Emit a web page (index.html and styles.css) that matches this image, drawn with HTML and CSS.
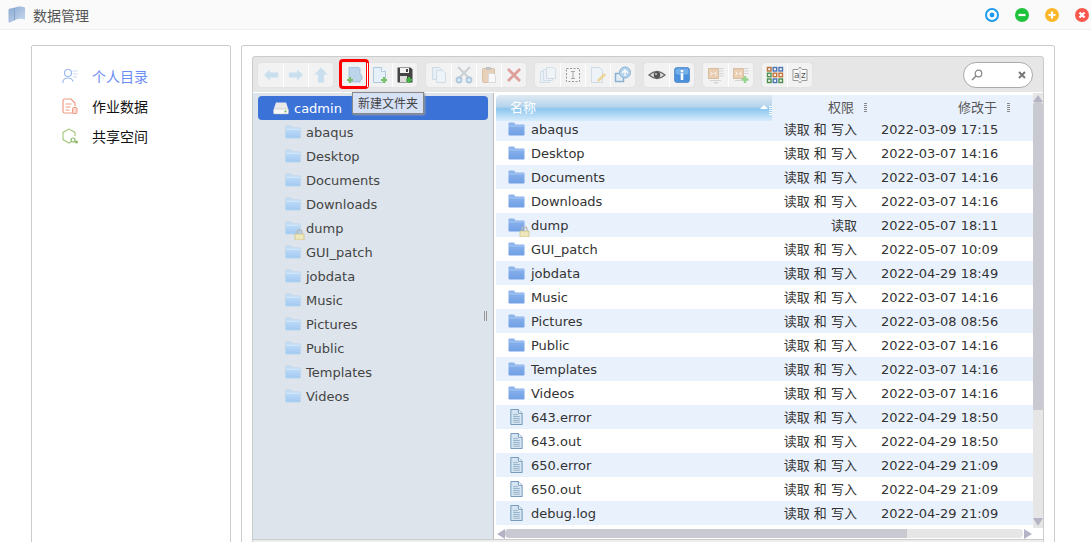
FILE: index.html
```html
<!DOCTYPE html>
<html lang="zh">
<head>
	<meta charset="utf-8" />
	<title>数据管理</title>
	<link rel="stylesheet" href="styles.css">
</head>
<body>
	<svg class="defs" width="0" height="0">
		<defs>
			<linearGradient id="gFolder" x1="0" y1="0" x2="0" y2="1"><stop offset="0" stop-color="#8fb6ee"/><stop offset="1" stop-color="#6f9fe4"/></linearGradient>
			<linearGradient id="gTree" x1="0" y1="0" x2="0" y2="1"><stop offset="0" stop-color="#c6dff8"/><stop offset="1" stop-color="#a2caf2"/></linearGradient>
			<linearGradient id="gLogo" x1="0" y1="0" x2="1" y2="1"><stop offset="0" stop-color="#8ba9d2"/><stop offset="1" stop-color="#c9daf0"/></linearGradient>
			<symbol id="i-folder" viewBox="0 0 17 16"><path d="M0.5 2.500q0-1 1-1h4.500l1.500 2h8q1 0 1 1v9q0 1-1 1h-14q-1 0-1-1z" fill="url(#gFolder)"/><path d="M0.500 5h16" stroke="#a9c8f3" fill="none"/></symbol>
			<symbol id="i-tfolder" viewBox="0 0 17 16"><path d="M0.500 2.500q0-1 1-1h4.500l1.500 2h8q1 0 1 1v9q0 1-1 1h-14q-1 0-1-1z" fill="url(#gTree)" stroke="#b6d2ee" stroke-width=".6"/><path d="M1 5h15" stroke="#dcebfa" fill="none"/></symbol>
			<symbol id="i-file" viewBox="0 0 17 17"><path d="M2.500 0.500h8l4 4v12h-12z" fill="#d5e5f2" stroke="#6d94b8"/><path d="M10.500 0.500v4h4" fill="#fff" stroke="#6d94b8"/><path d="M5 6h5M5 8h7M5 10h7M5 12h7M5 14h7" stroke="#94b0c8"/></symbol>
			<symbol id="i-lock" viewBox="0 0 11 11"><path d="M3 5V3.500a2.500 2.500 0 0 1 5 0V5" fill="none" stroke="#b9b9b9" stroke-width="1.300"/><rect x="1" y="5" width="9" height="6" fill="#efe6bb" stroke="#c8bd85" stroke-width=".7"/></symbol>
			<symbol id="i-drive" viewBox="0 0 16 14"><path d="M3 1.500h10l2.500 7h-15z" fill="#e9e9e9"/><rect x="0.500" y="8" width="15" height="5" rx="1" fill="#f8f8f8" stroke="#b8b8b8" stroke-width=".5"/><circle cx="12.500" cy="10.500" r="1" fill="#63b04c"/></symbol>
			<symbol id="t-back" viewBox="0 0 18 18"><path d="M2 9l6-5.500v3h8v5H8v3z" fill="#c4dcee" stroke="#d6e7f4" stroke-width=".6"/></symbol>
			<symbol id="t-forward" viewBox="0 0 18 18"><path d="M16 9l-6-5.500v3H2v5h8v3z" fill="#c4dcee" stroke="#d6e7f4" stroke-width=".6"/></symbol>
			<symbol id="t-up" viewBox="0 0 18 18"><path d="M9 1.500l6.500 7H12v8H6v-8H2.500z" fill="#c4dcee" stroke="#d6e7f4" stroke-width=".6"/></symbol>
			<symbol id="t-mkdir" viewBox="0 0 18 18"><path d="M3 1.500h10l1 1v6q2 .5 2 1.500v3q0 1-2 1.500v1.500H3z" fill="#bcd5ea" stroke="#93b7d6" stroke-width=".7"/><path d="M4 11v6M1 14h6" stroke="#7cc068" stroke-width="2.200"/></symbol>
			<symbol id="t-mkfile" viewBox="0 0 18 18"><path d="M2.500 1.500h8l4 4v11h-12z" fill="#e6f0f9" stroke="#b0c8dc"/><path d="M10.500 1.500v4h4" fill="#fff" stroke="#b0c8dc"/><path d="M13 11v6M10 14h6" stroke="#7cc068" stroke-width="2.200"/></symbol>
			<symbol id="t-save" viewBox="0 0 18 18"><path d="M1.500 1.500h13l2 2v13h-15z" fill="#444"/><rect x="4" y="2" width="9" height="5" fill="#f2f2f2"/><rect x="10" y="3" width="2" height="3" fill="#444"/><rect x="4" y="10" width="7" height="6" fill="#ddd"/><path d="M13 11v6M10 14h6" stroke="#46b348" stroke-width="2.400"/></symbol>
			<symbol id="t-copy" viewBox="0 0 18 18"><path d="M2.500 1.500h7l2 2v10h-9z" fill="#e6eff6" stroke="#c9d9e6"/><path d="M6.500 4.500h6l3 3v9h-9z" fill="#eef4f9" stroke="#c9d9e6"/></symbol>
			<symbol id="t-cut" viewBox="0 0 18 18"><path d="M3 1l11 11M15 1L4 12" stroke="#c4c9ce" stroke-width="2" fill="none"/><circle cx="4" cy="14" r="2.600" fill="#dbe8f3" stroke="#9fc0dc" stroke-width="1.600"/><circle cx="14" cy="14" r="2.600" fill="#dbe8f3" stroke="#9fc0dc" stroke-width="1.600"/></symbol>
			<symbol id="t-paste" viewBox="0 0 18 18"><rect x="2.500" y="2.500" width="12" height="14" rx="1" fill="#e6cdb0" stroke="#d3b898"/><rect x="6" y="1" width="5" height="3" fill="#bbb"/><path d="M8.500 7.500h5l2 2v7h-7z" fill="#fafafa" stroke="#d8d8d8"/></symbol>
			<symbol id="t-rm" viewBox="0 0 18 18"><path d="M3 3l12 12M15 3L3 15" stroke="#dc928d" stroke-width="2.800" fill="none"/></symbol>
			<symbol id="t-dup" viewBox="0 0 18 18"><path d="M1.500 5.500h7l2 2v9h-9z" fill="#e9f0f6" stroke="#ccdae6"/><path d="M4.500 3.500h7l2 2v9h-9z" fill="#e9f0f6" stroke="#ccdae6"/><path d="M7.500 1.500h7l2 2v9h-9z" fill="#f0f5f9" stroke="#ccdae6"/></symbol>
			<symbol id="t-rename" viewBox="0 0 18 18"><rect x="2.500" y="2.500" width="13" height="13" fill="#f6f6f6" stroke="#888" stroke-dasharray="2 1.500"/><path d="M7 5.500h4M7 12.500h4M9 5.500v7" stroke="#999" fill="none"/></symbol>
			<symbol id="t-edit" viewBox="0 0 18 18"><path d="M2.500 1.500h8l3 3v12h-11z" fill="#eef4f9" stroke="#c9d9e6"/><path d="M8 16l1-3 6-6 2 2-6 6z" fill="#eccf8c"/></symbol>
			<symbol id="t-resize" viewBox="0 0 18 18"><rect x="1.500" y="7.500" width="8" height="8" fill="#e0ecf6" stroke="#7ba7cf" stroke-width="1.500"/><circle cx="11" cy="6.500" r="5.500" fill="#aacdea" stroke="#7ba7cf"/><path d="M8 7l3-3 3 3M11 4.500V10" stroke="#fff" fill="none" stroke-width="1.400"/></symbol>
			<symbol id="t-eye" viewBox="0 0 18 18"><path d="M1 9q8-7 16 0q-8 7-16 0z" fill="#e4e4e4" stroke="#666" stroke-width="1.300"/><circle cx="9" cy="9" r="3.300" fill="#555"/><circle cx="8" cy="8" r="1" fill="#ccc"/></symbol>
			<symbol id="t-info" viewBox="0 0 18 18"><rect x="1.500" y="1.500" width="15" height="15" rx="2.500" fill="#4a90dc" stroke="#3a78c0" stroke-width=".6"/><rect x="2.500" y="2.500" width="13" height="6" rx="2" fill="#74aee8"/><rect x="7.700" y="4" width="2.600" height="2.200" fill="#fff"/><rect x="7.700" y="7.200" width="2.600" height="6.800" fill="#fff"/></symbol>
			<symbol id="t-extract" viewBox="0 0 18 18"><rect x="1.500" y="2.500" width="10" height="10" fill="#e9c8a8" stroke="#d3b494"/><path d="M3.500 6l2 1.500-2 1.500M9.500 6l-2 1.500 2 1.500" stroke="#fff" fill="none"/><path d="M11.500 2.500h5M11.500 5h5M11.500 7.500h5M11.500 10h5M3 14.500h11" stroke="#cfcfcf"/><path d="M6 16h6l-3 2z" fill="#cfcfcf"/></symbol>
			<symbol id="t-archive" viewBox="0 0 18 18"><rect x="1.500" y="2.500" width="10" height="10" fill="#e9c8a8" stroke="#d3b494"/><path d="M3.500 6l2 1.500-2 1.500M9.500 6l-2 1.500 2 1.500" stroke="#fff" fill="none"/><path d="M11.500 2.500h5M11.500 5h5M11.500 7.500h5M3 14.500h6" stroke="#cfcfcf"/><path d="M13 10v7M9.500 13.500h7" stroke="#86d07c" stroke-width="2.400"/></symbol>
			<symbol id="t-grid" viewBox="0 0 18 18"><g fill="#f7f7f7" stroke-width="1.400"><rect x="1.500" y="1.500" width="3.500" height="3.500" stroke="#b5703a"/><rect x="7.200" y="1.500" width="3.500" height="3.500" stroke="#4a74b4"/><rect x="13" y="1.500" width="3.500" height="3.500" stroke="#4a74b4"/><rect x="1.500" y="7.200" width="3.500" height="3.500" stroke="#4b8f4b"/><rect x="7.200" y="7.200" width="3.500" height="3.500" stroke="#c7743a"/><rect x="13" y="7.200" width="3.500" height="3.500" stroke="#c7743a"/><rect x="1.500" y="13" width="3.500" height="3.500" stroke="#4b8f4b"/><rect x="7.200" y="13" width="3.500" height="3.500" stroke="#4a74b4"/><rect x="13" y="13" width="3.500" height="3.500" stroke="#4b8f4b"/></g></symbol>
			<symbol id="t-sort" viewBox="0 0 18 18"><path d="M2 3.500h5l2-2.500 2 2.500h5v11h-5l-2 2.500-2-2.500H2z" fill="#fafafa" stroke="#999"/><path d="M9 4v10" stroke="#bbb"/></symbol>
		</defs>
	</svg>

	<div class="topbar">
		<svg class="logo" viewBox="0 0 18 18"><path d="M0.500 4q0-1 1-1.300L7 1.500q5-2 10 0v12q-5-1.500-10 .5l-5 2.500q-1.500.5-1.500-1z" fill="url(#gLogo)"/><path d="M6.500 2v12.500" stroke="#7c9cc8" stroke-width=".8"/></svg>
		<span class="topbar-title">数据管理</span>
		<div class="winbtns">
			<svg class="winbtn" viewBox="0 0 14 14"><circle cx="7" cy="7" r="6" fill="#fff" stroke="#1c9bf0" stroke-width="2"/><circle cx="7" cy="7" r="2.400" fill="#1c9bf0"/></svg>
			<svg class="winbtn" viewBox="0 0 14 14"><circle cx="7" cy="7" r="7" fill="#1fc23b"/><path d="M3.500 7h7" stroke="#fff" stroke-width="2.200"/></svg>
			<svg class="winbtn" viewBox="0 0 14 14"><circle cx="7" cy="7" r="7" fill="#fdb72b"/><path d="M3.500 7h7M7 3.500v7" stroke="#fff" stroke-width="2.200"/></svg>
			<svg class="winbtn" viewBox="0 0 14 14"><circle cx="7" cy="7" r="7" fill="#f9584f"/><path d="M4.500 4.500l5 5M9.500 4.500l-5 5" stroke="#fff" stroke-width="2.200"/></svg>
		</div>
	</div>

	<div class="content">
		<div class="side">
			<div class="side-item side-item-active">
				<svg class="side-ico" viewBox="0 0 16 16"><circle cx="6" cy="5" r="3.500" fill="none" stroke="#9db9ea" stroke-width="1.200"/><path d="M0.800 15q0-5 5.200-5 4 0 5 3.500" fill="none" stroke="#9db9ea" stroke-width="1.200"/><path d="M10.500 3h5M11 6h4.500M11 9h4" stroke="#c9d9f3" stroke-width="1.200"/></svg>
				<span>个人目录</span>
			</div>
			<div class="side-item">
				<svg class="side-ico" viewBox="0 0 16 16"><path d="M11 15H2.500q-1.500 0-1.500-1.500v-11Q1 1 2.500 1H9l4 4v3" fill="none" stroke="#f09a84" stroke-width="1.200"/><path d="M3.500 6h6M3.500 9h5M3.500 12h4" stroke="#f09a84" stroke-width="1.200"/><rect x="10.500" y="9.500" width="4.500" height="6" rx="1" fill="#fbd9d0" stroke="#f09a84"/></svg>
				<span>作业数据</span>
			</div>
			<div class="side-item">
				<svg class="side-ico" viewBox="0 0 16 16"><path d="M7 1l6 3.400V8M7 1L1 4.400v7.200L7 15l2-1" fill="none" stroke="#a9c985" stroke-width="1.200"/><circle cx="11" cy="12" r="2" fill="none" stroke="#8fba68" stroke-width="1.200"/><circle cx="14.500" cy="14" r="1.500" fill="#8fba68"/></svg>
				<span>共享空间</span>
			</div>
		</div>

		<div class="panel">
			<div class="finder">
				<div class="toolbar">
					<div class="tgroup">
						<span class="tbtn off"><svg class="tico"><use href="#t-back"/></svg></span>
						<span class="tbtn off"><svg class="tico"><use href="#t-forward"/></svg></span>
						<span class="tbtn off"><svg class="tico"><use href="#t-up"/></svg></span>
					</div>
					<div class="tgroup">
						<span class="tbtn tbtn-marked">
							<svg class="tico"><use href="#t-mkdir"/></svg>
							<span class="tip">新建文件夹</span>
						</span>
						<span class="tbtn"><svg class="tico"><use href="#t-mkfile"/></svg></span>
						<span class="tbtn"><svg class="tico"><use href="#t-save"/></svg></span>
					</div>
					<div class="tgroup">
						<span class="tbtn off"><svg class="tico"><use href="#t-copy"/></svg></span>
						<span class="tbtn off"><svg class="tico"><use href="#t-cut"/></svg></span>
						<span class="tbtn off"><svg class="tico"><use href="#t-paste"/></svg></span>
						<span class="tbtn off"><svg class="tico"><use href="#t-rm"/></svg></span>
					</div>
					<div class="tgroup">
						<span class="tbtn off"><svg class="tico"><use href="#t-dup"/></svg></span>
						<span class="tbtn off"><svg class="tico"><use href="#t-rename"/></svg></span>
						<span class="tbtn off"><svg class="tico"><use href="#t-edit"/></svg></span>
						<span class="tbtn off"><svg class="tico"><use href="#t-resize"/></svg></span>
					</div>
					<div class="tgroup">
						<span class="tbtn"><svg class="tico"><use href="#t-eye"/></svg></span>
						<span class="tbtn"><svg class="tico"><use href="#t-info"/></svg></span>
					</div>
					<div class="tgroup">
						<span class="tbtn off"><svg class="tico"><use href="#t-extract"/></svg></span>
						<span class="tbtn off"><svg class="tico"><use href="#t-archive"/></svg></span>
					</div>
					<div class="tgroup">
						<span class="tbtn"><svg class="tico"><use href="#t-grid"/></svg></span>
						<span class="tbtn tbtn-sort"><svg class="tico"><use href="#t-sort"/></svg><span class="sort-label">az</span></span>
					</div>
					<div class="search">
						<svg class="search-ico" viewBox="0 0 12 12"><circle cx="7.500" cy="4.500" r="3.300" fill="none" stroke="#888" stroke-width="1.200"/><path d="M5 7l-4 4" stroke="#888" stroke-width="1.600"/></svg>
						<svg class="search-x" viewBox="0 0 8 8"><path d="M1 1l6 6M7 1L1 7" stroke="#777" stroke-width="2"/></svg>
					</div>
				</div>

				<div class="body">
					<div class="tree">
						<div class="tree-root"><svg class="drive"><use href="#i-drive"/></svg>cadmin</div>
						<div class="tree-item"><svg class="folder"><use href="#i-tfolder"/></svg>abaqus</div>
						<div class="tree-item"><svg class="folder"><use href="#i-tfolder"/></svg>Desktop</div>
						<div class="tree-item"><svg class="folder"><use href="#i-tfolder"/></svg>Documents</div>
						<div class="tree-item"><svg class="folder"><use href="#i-tfolder"/></svg>Downloads</div>
						<div class="tree-item"><span class="locked"><svg class="folder"><use href="#i-tfolder"/></svg><svg class="lock"><use href="#i-lock"/></svg></span>dump</div>
						<div class="tree-item"><svg class="folder"><use href="#i-tfolder"/></svg>GUI_patch</div>
						<div class="tree-item"><svg class="folder"><use href="#i-tfolder"/></svg>jobdata</div>
						<div class="tree-item"><svg class="folder"><use href="#i-tfolder"/></svg>Music</div>
						<div class="tree-item"><svg class="folder"><use href="#i-tfolder"/></svg>Pictures</div>
						<div class="tree-item"><svg class="folder"><use href="#i-tfolder"/></svg>Public</div>
						<div class="tree-item"><svg class="folder"><use href="#i-tfolder"/></svg>Templates</div>
						<div class="tree-item"><svg class="folder"><use href="#i-tfolder"/></svg>Videos</div>
						<span class="tree-handle"></span>
					</div>

					<div class="main">
						<div class="list">
							<div class="list-head">
								<div class="head-name">名称<span class="sort-up"></span><span class="grip grip-light"></span></div>
								<div class="head-col head-perm">权限<span class="grip"></span></div>
								<div class="head-col head-date">修改于<span class="grip"></span></div>
							</div>
							<div class="row odd"><div class="cell-name"><svg class="licon"><use href="#i-folder"/></svg>abaqus</div><div class="cell-perm">读取 和 写入</div><div class="cell-date">2022-03-09 17:15</div></div>
							<div class="row"><div class="cell-name"><svg class="licon"><use href="#i-folder"/></svg>Desktop</div><div class="cell-perm">读取 和 写入</div><div class="cell-date">2022-03-07 14:16</div></div>
							<div class="row odd"><div class="cell-name"><svg class="licon"><use href="#i-folder"/></svg>Documents</div><div class="cell-perm">读取 和 写入</div><div class="cell-date">2022-03-07 14:16</div></div>
							<div class="row"><div class="cell-name"><svg class="licon"><use href="#i-folder"/></svg>Downloads</div><div class="cell-perm">读取 和 写入</div><div class="cell-date">2022-03-07 14:16</div></div>
							<div class="row odd"><div class="cell-name"><span class="locked"><svg class="licon"><use href="#i-folder"/></svg><svg class="lock"><use href="#i-lock"/></svg></span>dump</div><div class="cell-perm">读取</div><div class="cell-date">2022-05-07 18:11</div></div>
							<div class="row"><div class="cell-name"><svg class="licon"><use href="#i-folder"/></svg>GUI_patch</div><div class="cell-perm">读取 和 写入</div><div class="cell-date">2022-05-07 10:09</div></div>
							<div class="row odd"><div class="cell-name"><svg class="licon"><use href="#i-folder"/></svg>jobdata</div><div class="cell-perm">读取 和 写入</div><div class="cell-date">2022-04-29 18:49</div></div>
							<div class="row"><div class="cell-name"><svg class="licon"><use href="#i-folder"/></svg>Music</div><div class="cell-perm">读取 和 写入</div><div class="cell-date">2022-03-07 14:16</div></div>
							<div class="row odd"><div class="cell-name"><svg class="licon"><use href="#i-folder"/></svg>Pictures</div><div class="cell-perm">读取 和 写入</div><div class="cell-date">2022-03-08 08:56</div></div>
							<div class="row"><div class="cell-name"><svg class="licon"><use href="#i-folder"/></svg>Public</div><div class="cell-perm">读取 和 写入</div><div class="cell-date">2022-03-07 14:16</div></div>
							<div class="row odd"><div class="cell-name"><svg class="licon"><use href="#i-folder"/></svg>Templates</div><div class="cell-perm">读取 和 写入</div><div class="cell-date">2022-03-07 14:16</div></div>
							<div class="row"><div class="cell-name"><svg class="licon"><use href="#i-folder"/></svg>Videos</div><div class="cell-perm">读取 和 写入</div><div class="cell-date">2022-03-07 14:16</div></div>
							<div class="row odd"><div class="cell-name"><svg class="licon"><use href="#i-file"/></svg>643.error</div><div class="cell-perm">读取 和 写入</div><div class="cell-date">2022-04-29 18:50</div></div>
							<div class="row"><div class="cell-name"><svg class="licon"><use href="#i-file"/></svg>643.out</div><div class="cell-perm">读取 和 写入</div><div class="cell-date">2022-04-29 18:50</div></div>
							<div class="row odd"><div class="cell-name"><svg class="licon"><use href="#i-file"/></svg>650.error</div><div class="cell-perm">读取 和 写入</div><div class="cell-date">2022-04-29 21:09</div></div>
							<div class="row"><div class="cell-name"><svg class="licon"><use href="#i-file"/></svg>650.out</div><div class="cell-perm">读取 和 写入</div><div class="cell-date">2022-04-29 21:09</div></div>
							<div class="row odd"><div class="cell-name"><svg class="licon"><use href="#i-file"/></svg>debug.log</div><div class="cell-perm">读取 和 写入</div><div class="cell-date">2022-04-29 21:09</div></div>
						</div>
						<div class="vscroll">
							<span class="arrow-up"></span>
							<span class="vthumb"></span>
							<span class="vtrack"></span>
							<span class="arrow-down"></span>
						</div>
						<div class="hscroll">
							<span class="arrow-left"></span>
							<span class="hthumb"></span>
							<span class="htrack"></span>
							<span class="arrow-right"></span>
						</div>
					</div>
				</div>
				<div class="status"></div>
			</div>
		</div>
	</div>
</body>
</html>
```

FILE: styles.css
```css
html, body
{
	margin: 0;
	height: 542px;
	overflow: hidden;
}

body
{
	background-color: #fff;
	font-family: "DejaVu Sans", "Noto Sans CJK SC", sans-serif;
	font-size: 13px;
	color: #333;
}

.defs
{
	position: absolute;
}

/* top bar */

.topbar
{
	display: flex;
	align-items: center;
	height: 29px;
	padding: 0 2px 0 8px;
	background-color: #fafafa;
	border-bottom: 1px solid #eee;
}

.logo
{
	width: 18px;
	height: 18px;
	margin-right: 7px;
}

.topbar-title
{
	font-family: "Noto Sans CJK SC", sans-serif;
	font-size: 14px;
	color: #555;
}

.winbtns
{
	display: flex;
	gap: 16px;
	margin-left: auto;
}

.winbtn
{
	width: 14px;
	height: 14px;
}

/* page panels */

.content
{
	display: flex;
	gap: 10px;
	padding: 15px 0 0 31px;
}

.side
{
	box-sizing: border-box;
	width: 200px;
	height: 520px;
	padding-top: 15px;
	background-color: #fff;
	border: 1px solid #ccc;
	border-radius: 2px;
}

.side-item
{
	display: flex;
	align-items: center;
	height: 30px;
	padding-left: 30px;
	font-family: "Noto Sans CJK SC", sans-serif;
	font-size: 14px;
	color: #111;
}

.side-item-active
{
	color: #6b8cf5;
}

.side-ico
{
	width: 16px;
	height: 16px;
	margin-right: 14px;
}

.panel
{
	box-sizing: border-box;
	width: 814px;
	height: 520px;
	padding: 10px;
	border: 1px solid #ccc;
	border-radius: 2px;
}

.finder
{
	width: 790px;
	border: 1px solid #ccc;
	border-radius: 3px 3px 0 0;
	background-color: #e6e6e6;
}

/* toolbar */

.toolbar
{
	display: flex;
	gap: 9px;
	box-sizing: border-box;
	height: 36px;
	padding: 6px 0 0 5px;
	border-bottom: 1px solid #fff;
}

.tgroup
{
	display: flex;
	height: 24px;
	border-radius: 3px;
	background-color: #f2f2f2;
	box-shadow: 0 0 1px #ccc;
}

.tbtn
{
	position: relative;
	display: flex;
	align-items: center;
	justify-content: center;
	box-sizing: border-box;
	width: 25px;
	height: 24px;
	border-left: 1px solid #fff;
}

.tbtn:first-child
{
	border-left: none;
}

.tico
{
	width: 18px;
	height: 18px;
}

.off .tico
{
	opacity: .85;
}

.tbtn-marked::after
{
	content: "";
	position: absolute;
	top: -4px;
	left: -3px;
	width: 24px;
	height: 24px;
	border: 3px solid #f00;
	border-radius: 4px;
}

.tip
{
	position: absolute;
	top: 29px;
	left: 10px;
	z-index: 3;
	padding: 2px 5px;
	font-family: "Noto Sans CJK SC", sans-serif;
	font-size: 12px;
	line-height: 16px;
	white-space: nowrap;
	color: #444;
	background-color: #d6e1f6;
	border: 1px solid #888;
	box-shadow: 1px 1px 2px #999;
}

.sort-label
{
	position: absolute;
	top: 7px;
	left: 6px;
	font-size: 9px;
	letter-spacing: 1.500px;
	line-height: 10px;
	color: #555;
}

.search
{
	display: flex;
	align-items: center;
	justify-content: space-between;
	box-sizing: border-box;
	width: 70px;
	height: 26px;
	margin: -1px 10px 0 auto;
	padding: 0 6px 0 7px;
	background-color: #fff;
	border: 1px solid #aaa;
	border-radius: 13px;
}

.search-ico
{
	width: 12px;
	height: 12px;
}

.search-x
{
	width: 8px;
	height: 8px;
}

/* tree */

.body
{
	display: flex;
	height: 446px;
}

.tree
{
	position: relative;
	box-sizing: border-box;
	width: 241px;
	padding-top: 3px;
	background-color: #dde4ec;
	border-right: 1px solid #bbb;
	color: #444;
}

.tree-root
{
	display: flex;
	align-items: center;
	height: 24px;
	margin: 0 5px;
	padding-left: 15px;
	color: #fff;
	background-color: #3a72d8;
	border-radius: 4px;
}

.drive
{
	width: 16px;
	height: 14px;
	margin-right: 5px;
}

.tree-item
{
	display: flex;
	align-items: center;
	height: 24px;
	padding-left: 32px;
}

.folder
{
	width: 16px;
	height: 16px;
	margin-right: 5px;
}

.locked
{
	position: relative;
	display: flex;
}

.lock
{
	position: absolute;
	top: 9px;
	left: 9px;
	width: 11px;
	height: 11px;
}

.licon + .lock
{
	left: 11px;
}

.tree-handle
{
	position: absolute;
	top: 218px;
	left: 231px;
	width: 1px;
	height: 10px;
	border-left: 1px solid #999;
	border-right: 1px solid #999;
}

/* file list */

.main
{
	display: grid;
	grid-template-columns: 537px 10px;
	grid-template-rows: 435px 11px;
	padding-left: 2px;
	background-color: #fff;
	flex: 1;
}

.list
{
	padding-top: 2px;
	overflow: hidden;
}

.list-head
{
	position: relative;
	z-index: 1;
	display: grid;
	grid-template-columns: 276px 95px 1fr;
	height: 25px;
	margin-bottom: -3px;
}

.head-name
{
	position: relative;
	padding-left: 14px;
	line-height: 26px;
	color: #fff;
	background: linear-gradient(#e0eaf3 0%, #b5d4ec 45%, #8cc6ef 53%, #d8ecfb 100%);
	border-top-left-radius: 4px;
}

.sort-up
{
	position: absolute;
	top: 10px;
	left: 264px;
	border-left: 4px solid transparent;
	border-right: 4px solid transparent;
	border-bottom: 4px solid #fff;
}

.head-col
{
	display: flex;
	justify-content: flex-end;
	align-items: center;
	gap: 10px;
	height: 22px;
	color: #555;
	background-color: #e9f1fd;
}

.head-date
{
	padding-right: 23px;
}

.grip
{
	width: 3px;
	height: 9px;
	margin-top: 3px;
	background: repeating-linear-gradient(#888 0 1px, transparent 1px 2px);
}

.grip-light
{
	position: absolute;
	top: 11px;
	right: 0;
	margin: 0;
	background: repeating-linear-gradient(#fff 0 1px, transparent 1px 2px);
}

.row
{
	display: grid;
	grid-template-columns: 276px 85px 1fr;
	align-items: center;
	height: 24px;
}

.odd
{
	background-color: #e9f1fd;
}

.cell-name
{
	display: flex;
	align-items: center;
	padding-left: 12px;
}

.licon
{
	width: 17px;
	height: 16px;
	margin-right: 6px;
}

.cell-perm
{
	padding-bottom: 2px;
	text-align: right;
}

.cell-date
{
	padding-left: 24px;
}

/* scrollbars */

.vscroll
{
	display: flex;
	flex-direction: column;
	align-items: center;
	padding-top: 2px;
	background-color: #e6e6e6;
}

.arrow-up
{
	flex: none;
	border-left: 5px solid transparent;
	border-right: 5px solid transparent;
	border-bottom: 7px solid #b4b4c6;
}

.vthumb
{
	flex: none;
	width: 10px;
	height: 308px;
	background-color: #c9c9d2;
	border-radius: 4px 4px 0 0;
}

.vtrack
{
	flex: none;
	height: 108px;
}

.arrow-down
{
	flex: none;
	border-left: 5px solid transparent;
	border-right: 5px solid transparent;
	border-top: 8px solid #b4b4c6;
}

.hscroll
{
	display: flex;
	align-items: center;
	grid-column: 1 / 3;
	padding-left: 1px;
}

.arrow-left
{
	border-top: 5px solid transparent;
	border-bottom: 5px solid transparent;
	border-right: 8px solid #b4b4c6;
}

.hthumb
{
	width: 402px;
	height: 9px;
	background-color: #c9c9d2;
	border-radius: 4px 0 0 4px;
}

.htrack
{
	width: 116px;
	height: 9px;
	background-color: #e6e6e6;
	border-radius: 0 4px 4px 0;
}

.arrow-right
{
	margin-left: 1px;
	border-top: 5px solid transparent;
	border-bottom: 5px solid transparent;
	border-left: 8px solid #b4b4c6;
}

.status
{
	height: 6px;
	background-color: #eee;
	border-top: 1px solid #ccc;
}
```
